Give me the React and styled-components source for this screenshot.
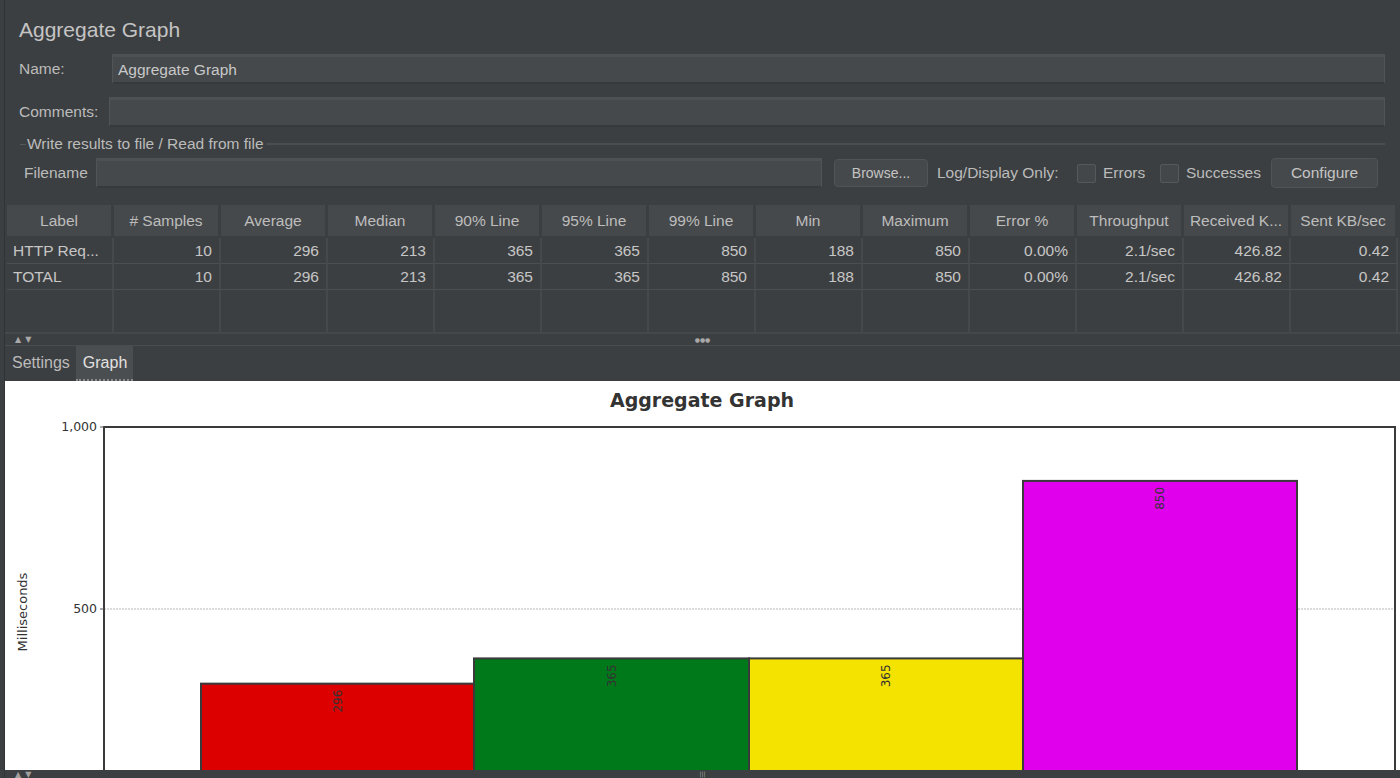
import React from 'react';
import styled, { createGlobalStyle } from 'styled-components';

const Global = createGlobalStyle`
  html, body { margin: 0; padding: 0; background: #3c3f41; }
  body { font-family: "Liberation Sans", Arial, sans-serif; }
  * { box-sizing: border-box; }
`;

const Root = styled.div`
  width: 1400px;
  height: 778px;
  overflow: hidden;
  background: #3c3f41;
  color: #bbbbbb;
  font-family: "Liberation Sans", Arial, sans-serif;
  font-size: 15.5px;
  display: flex;
`;

const Window = styled.div`
  margin-left: 4px;
  border-left: 1px solid #313335;
  flex: 1;
  display: flex;
  flex-direction: column;
  min-width: 0;
  & > * { flex-shrink: 0; }
`;

const Form = styled.div`
  padding: 0 15px 0 14px;
  display: flex;
  flex-direction: column;
`;

const Title = styled.div`
  padding-top: 18px;
  height: 42px;
  font-size: 21px;
  line-height: 24px;
  color: #c4c4c4;
`;

const FieldRow = styled.div`
  margin-top: ${p => p.$top}px;
  height: 30px;
  display: flex;
  align-items: center;
`;

const Label = styled.div`
  width: ${p => p.$w}px;
  margin-left: ${p => p.$ml || 0}px;
  flex: none;
  white-space: nowrap;
`;

const Input = styled.div`
  flex: ${p => (p.$w ? 'none' : 1)};
  width: ${p => (p.$w ? `${p.$w}px` : 'auto')};
  height: 30px;
  background: #45494b;
  border: 1px solid #505456;
  border-top: 3px solid #4d5153;
  border-bottom: 2px solid #37393b;
  padding: 0 5px;
  display: flex;
  align-items: center;
  color: #c8c8c8;
`;

const Legend = styled.div`
  margin-top: 8px;
  height: 18px;
  display: flex;
  align-items: center;
`;

const LegendDash = styled.div`
  margin-left: 1px;
  width: 6px;
  height: 1px;
  background: #55595b;
`;

const LegendText = styled.div`
  padding: 0 2px 0 1px;
  white-space: nowrap;
`;

const LegendLine = styled.div`
  flex: 1;
  height: 2px;
  background: #4a4e50;
`;

const Button = styled.div`
  flex: none;
  width: ${p => p.$w}px;
  height: ${p => p.$h}px;
  margin-left: ${p => p.$ml}px;
  background: #46494b;
  border: 1px solid #505456;
  border-radius: 4px;
  display: flex;
  align-items: center;
  justify-content: center;
  font-size: ${p => p.$fs || 15.5}px;
  color: #c4c4c4;
`;

const Check = styled.div`
  flex: none;
  width: 19px;
  height: 19px;
  background: #43474a;
  border: 1px solid #55595b;
  border-radius: 2px;
  margin-right: ${p => p.$mr}px;
`;

const Table = styled.div`
  margin: 16px 0 0 2px;
  width: 1391px;
  display: grid;
  grid-template-columns: repeat(13, 107px);
`;

const HeadCell = styled.div`
  height: 34px;
  padding-top: 1px;
  background: #46494b;
  border-right: 3px solid #3c3f41;
  border-top: 1px solid #3c3f41;
  border-bottom: 2px solid #3c3f41;
  display: flex;
  align-items: center;
  justify-content: center;
  white-space: nowrap;
  color: #bdbdbd;
`;

const Cell = styled.div`
  height: ${p => p.$h || 26}px;
  padding: ${p => (p.$filler ? 0 : '1px')} 7px 0 6px;
  border-right: 2px solid #46494b;
  border-bottom: ${p => (p.$filler ? 0 : 1)}px solid #4b4f51;
  display: flex;
  align-items: center;
  justify-content: ${p => (p.$left ? 'flex-start' : 'flex-end')};
  white-space: nowrap;
  color: #c6c6c6;
`;

const Splitter = styled.div`
  height: 14px;
  border-top: 2px solid #45484a;
  border-bottom: 1px solid #4a4d4f;
  display: grid;
  grid-template-columns: 1fr auto 1fr;
  align-items: center;
  color: #a8a8a8;
`;

const Arrows = styled.div`
  padding-left: 10px;
  letter-spacing: 4px;
  font-family: "DejaVu Sans", sans-serif;
  font-size: 8px;
  line-height: 9px;
`;

const Dots = styled.div`
  font-size: 6px;
  line-height: 7px;
  font-family: "DejaVu Sans", sans-serif;
`;

const TabBar = styled.div`
  height: 35px;
  display: flex;
  align-items: stretch;
  font-size: 16px;
`;

const Tab = styled.div`
  padding: 0 6px 0 7px;
  display: flex;
  align-items: center;
  background: ${p => (p.$active ? '#4b4e50' : 'transparent')};
  color: ${p => (p.$active ? '#e2e2e2' : '#bbbbbb')};
  border-bottom: 2px ${p => (p.$active ? 'dotted #8a8d8f' : 'solid transparent')};
`;

const ChartPanel = styled.div`
  height: 389px;
  background: #ffffff;
`;

const BottomStrip = styled.div`
  height: 8px;
  overflow: hidden;
  display: grid;
  grid-template-columns: 1fr auto 1fr;
  align-items: start;
  color: #a0a0a0;
`;

const headers = ['Label', '# Samples', 'Average', 'Median', '90% Line', '95% Line', '99% Line', 'Min', 'Maximum', 'Error %', 'Throughput', 'Received K...', 'Sent KB/sec'];
const rows = [
  ['HTTP Req...', '10', '296', '213', '365', '365', '850', '188', '850', '0.00%', '2.1/sec', '426.82', '0.42'],
  ['TOTAL', '10', '296', '213', '365', '365', '850', '188', '850', '0.00%', '2.1/sec', '426.82', '0.42'],
];

const bars = [
  { v: 296, x: 196, w: 273, c: '#dc0000' },
  { v: 365, x: 469, w: 275, c: '#00791a' },
  { v: 365, x: 744, w: 274, c: '#f4e200' },
  { v: 850, x: 1018, w: 274, c: '#e000ec' },
];

function Chart() {
  const y0 = 411;
  const k = 183 / 500;
  const left = 99;
  const right = 1390;
  const top = 46;
  return (
    <svg width="1395" height="389" viewBox="0 0 1395 389" style={{ display: 'block' }}>
      <text x="697" y="26" textAnchor="middle" fontFamily="DejaVu Sans, sans-serif" fontWeight="bold" fontSize="19" fill="#333">Aggregate Graph</text>
      <line x1={left} y1={228} x2={right} y2={228} stroke="#b8b8b8" strokeWidth="1" strokeDasharray="2 1" />
      {bars.map((b, i) => {
        const t = y0 - b.v * k;
        return (
          <g key={i}>
            <rect x={b.x} y={t} width={b.w} height={y0 - t + 10} fill={b.c} stroke="#3a3a3a" strokeWidth="2" />
            <text
              transform={`translate(${b.x + b.w / 2 + 4}, ${t + 6}) rotate(-90)`}
              textAnchor="end"
              fontFamily="DejaVu Sans, sans-serif"
              fontSize="12"
              fill="#333"
            >{b.v}</text>
          </g>
        );
      })}
      <line x1={left} y1={top} x2={right} y2={top} stroke="#3a3a3a" strokeWidth="2" />
      <line x1={left} y1={top - 1} x2={left} y2={395} stroke="#3a3a3a" strokeWidth="2" />
      <line x1={right} y1={top - 1} x2={right} y2={395} stroke="#3a3a3a" strokeWidth="2" />
      <line x1={95} y1={top} x2={left} y2={top} stroke="#555" strokeWidth="1" />
      <line x1={95} y1={228} x2={left} y2={228} stroke="#555" strokeWidth="1" />
      <text x="92" y={top + 4} textAnchor="end" fontFamily="DejaVu Sans, sans-serif" fontSize="12.5" fill="#333">1,000</text>
      <text x="92" y={228 + 4} textAnchor="end" fontFamily="DejaVu Sans, sans-serif" fontSize="12.5" fill="#333">500</text>
      <text transform="translate(22, 231) rotate(-90)" textAnchor="middle" fontFamily="DejaVu Sans, sans-serif" fontSize="13" fill="#333">Milliseconds</text>
    </svg>
  );
}

export default function App() {
  return (
    <Root>
      <Global />
      <Window>
        <Form>
          <Title>Aggregate Graph</Title>
          <FieldRow $top={12}>
            <Label $w={93}>Name:</Label>
            <Input>Aggregate Graph</Input>
          </FieldRow>
          <FieldRow $top={13}>
            <Label $w={90}>Comments:</Label>
            <Input />
          </FieldRow>
          <Legend>
            <LegendDash />
            <LegendText>Write results to file / Read from file</LegendText>
            <LegendLine />
          </Legend>
          <FieldRow $top={5}>
            <Label $w={72} $ml={5}>Filename</Label>
            <Input $w={726} />
            <Button $w={94} $h={28} $ml={12} $fs={14}>Browse...</Button>
            <Label $w={140} $ml={9}>Log/Display Only:</Label>
            <Check $mr={7} />
            <Label $w={57}>Errors</Label>
            <Check $mr={7} />
            <Label $w={85}>Successes</Label>
            <Button $w={107} $h={30} $ml={0}>Configure</Button>
          </FieldRow>
        </Form>
        <Table>
          {headers.map(h => <HeadCell key={h}>{h}</HeadCell>)}
          {rows.map((r, ri) => r.map((c, ci) => (
            <Cell key={`${ri}-${ci}`} $left={ci === 0}>{c}</Cell>
          )))}
          {headers.map(h => <Cell key={`f-${h}`} $h={42} $filler />)}
        </Table>
        <Splitter>
          <Arrows>▲▼</Arrows>
          <Dots>●●●</Dots>
          <div />
        </Splitter>
        <TabBar>
          <Tab>Settings</Tab>
          <Tab $active>Graph</Tab>
        </TabBar>
        <ChartPanel>
          <Chart />
        </ChartPanel>
        <BottomStrip>
          <Arrows>▲▼</Arrows>
          <Dots>|||</Dots>
          <div />
        </BottomStrip>
      </Window>
    </Root>
  );
}
